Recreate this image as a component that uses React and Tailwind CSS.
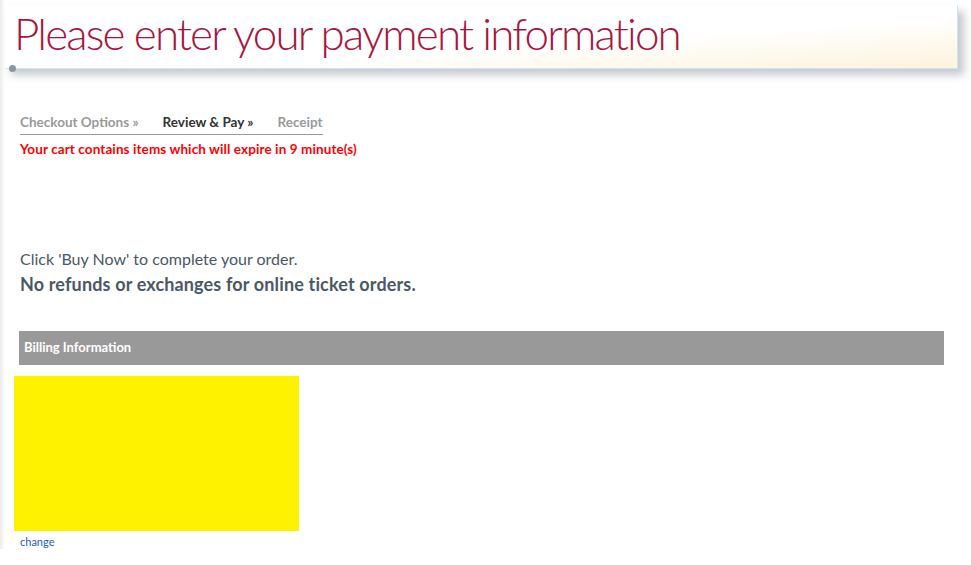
export default function App() {
  return (
    <div className="min-h-[565px] bg-white font-['Lato','Liberation_Sans',sans-serif]">
      <div className="flex">
        <div className="w-[5px] bg-gradient-to-r from-[#ececec] to-white" />
        <div className="flex-1">
          {/* Header */}
          <div className="pt-[5px] pr-[13px]">
            <div className="relative h-[64px] border-b border-r border-[#cfe4f5] bg-gradient-to-br from-white from-60% to-[#fdf3dc] shadow-[6px_6px_8px_rgba(90,100,120,0.35)]">
              <h1 className="pl-[9px] pt-0 text-[44px] font-light leading-[56px] tracking-[-1.85px] text-[#a8163f]">
                Please enter your payment information
              </h1>
              <div className="absolute -bottom-[4px] left-[4px] h-[7px] w-[7px] rounded-full bg-[#8a97a5]" />
            </div>
          </div>

          {/* Steps */}
          <div className="mt-[40px] pl-[15px]">
            <div className="inline-flex gap-[24px] border-b border-[#999] pb-[4px] text-[13.5px] font-bold leading-[16px]">
              <span className="text-[#999]">Checkout Options »</span>
              <span className="text-[#333]">Review &amp; Pay »</span>
              <span className="text-[#999]">Receipt</span>
            </div>
            <p className="mt-[6px] text-[13.5px] font-bold leading-[16px] tracking-[0.1px] text-[#ff0000]">
              Your cart contains items which will expire in 9 minute(s)
            </p>
          </div>

          {/* Notice */}
          <div className="mt-[91px] pl-[15px] text-[#4a5866]">
            <p className="text-[16px] leading-[22px]">Click 'Buy Now' to complete your order.</p>
            <p className="mt-[3px] text-[18px] font-bold leading-[22px] tracking-[0.15px]">
              No refunds or exchanges for online ticket orders.
            </p>
          </div>

          {/* Billing */}
          <div className="mt-[36px] pl-[14px] pr-[27px]">
            <div className="flex h-[34px] items-center bg-[#999999] pl-[5px] text-[13px] font-bold text-white">
              Billing Information
            </div>
          </div>
          <div className="mt-[11px] pl-[9px]">
            <div className="h-[155px] w-[285px] bg-[#fff200]" />
            <a href="#" className="mt-[4px] block pl-[6px] text-[11px] leading-[14px] text-[#1a5dc8]">
              change
            </a>
          </div>
        </div>
      </div>
    </div>
  );
}
